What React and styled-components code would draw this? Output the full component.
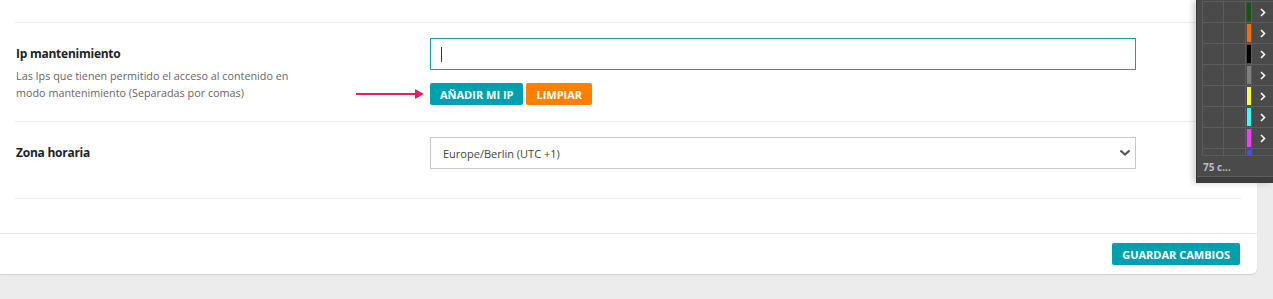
import React from "react";
import styled, { createGlobalStyle } from "styled-components";

const Global = createGlobalStyle`
  html, body { margin: 0; padding: 0; background: #ececec; }
  body { font-family: "Open Sans", "Liberation Sans", sans-serif; color: #333; }
  * { box-sizing: border-box; }
`;

const Page = styled.div`
  position: relative;
  width: 1273px;
  height: 299px;
  overflow: hidden;
  background: #ececec;
`;

const Card = styled.div`
  width: 1257px;
  background: #fff;
  border-radius: 0 0 6px 0;
  box-shadow: 0 1px 1px rgba(0, 0, 0, 0.12);
`;

const Body = styled.div`
  padding: 22px 16px 34px 15px;
`;

const Row = styled.div`
  position: relative;
  display: grid;
  grid-template-columns: 415px 706px;
  border-top: 1px solid #ebebeb;
  padding: 15px 0 ${(p) => p.$pb}px;
  &:last-child { border-bottom: 1px solid #ebebeb; }
`;

const Label = styled.div`
  padding: 7px 0 0 1px;
`;

const Title = styled.div`
  font-size: 12px;
  line-height: 18px;
  font-weight: 700;
  color: #222;
  letter-spacing: -0.25px;
`;

const Desc = styled.div`
  margin-top: 4px;
  font-size: 10.8px;
  line-height: 17px;
  color: #666;
  max-width: 285px;
`;

const Control = styled.div`
  display: flex;
  flex-direction: column;
  gap: 13px;
`;

const TextInput = styled.div`
  height: 32px;
  border: 1px solid #12a0ae;
  display: flex;
  align-items: center;
  padding-left: 10px;
`;

const Caret = styled.span`
  width: 1px;
  height: 15px;
  background: #333;
`;

const Buttons = styled.div`
  display: flex;
  gap: 3px;
`;

const Btn = styled.button`
  height: 22px;
  padding: 0 ${(p) => p.$px || 10}px;
  border: none;
  border-radius: 2px;
  background: ${(p) => p.$bg};
  color: #fff;
  font-family: "Open Sans", "Liberation Sans", sans-serif;
  font-weight: 700;
  font-size: 11px;
  letter-spacing: 0;
  cursor: pointer;
`;

const Select = styled.div`
  height: 32px;
  border: 1px solid #c8c8c8;
  display: flex;
  align-items: center;
  justify-content: space-between;
  padding: 0 3px 0 12px;
  font-size: 11px;
  color: #444;
`;

const Arrow = styled.svg`
  position: absolute;
  left: 341px;
  top: 65px;
`;

const Footer = styled.div`
  border-top: 1px solid #e6e6e6;
  display: flex;
  justify-content: flex-end;
  padding: 9px 17px 9px;
`;

/* floating dark panel */
const Panel = styled.div`
  position: absolute;
  top: 0;
  left: 1196px;
  width: 77px;
  height: 183px;
  background: #4a4a4a;
  border-left: 1px solid #383838;
  box-shadow: -3px 0 6px rgba(0, 0, 0, 0.18);
  display: flex;
  flex-direction: column;
`;

const Grid = styled.div`
  margin: 1px 0 0 5px;
  height: 155px;
  border-left: 1px solid #5c5c5c;
  border-bottom: 1px solid #5c5c5c;
  overflow: hidden;
`;

const GRow = styled.div`
  display: grid;
  grid-template-columns: 21px 22px 6px 1fr;
  height: 21px;
  border-top: 1px solid #5c5c5c;
`;

const Cell = styled.div`
  border-right: ${(p) => (p.$last ? "none" : "1px solid #5c5c5c")};
  display: flex;
  align-items: center;
  justify-content: center;
`;

const Bar = styled.div`
  width: 4px;
  height: 18px;
  margin-left: 1px;
  background: ${(p) => p.$c};
`;

const PanelText = styled.div`
  padding: 4px 0 0 6px;
  font-size: 10px;
  font-weight: 700;
  color: #b8bec8;
  height: 21px;
  border-bottom: 1px solid #5e5e5e;
`;

const PanelBar = styled.div`
  flex: 1;
  background: #3d3d3d;
`;

const colors = ["#0b5a12", "#ff6a00", "#000000", "#7f7f7f", "#ffff3a", "#38ffff", "#ff3aff", "#4a4aff"];

const Chevron = () => (
  <svg width="6" height="9" viewBox="0 0 6 9">
    <path d="M1 1 L4.5 4.5 L1 8" fill="none" stroke="#fff" strokeWidth="1.6" />
  </svg>
);

export default function App() {
  return (
    <>
      <Global />
      <Page>
        <Card>
          <Body>
            <Row $pb={16}>
              <Label>
                <Title>Ip mantenimiento</Title>
                <Desc>
                  Las Ips que tienen permitido el acceso al contenido en modo mantenimiento (Separadas por comas)
                </Desc>
              </Label>
              <Control>
                <TextInput>
                  <Caret />
                </TextInput>
                <Buttons>
                  <Btn $bg="#00a0ae">AÑADIR MI IP</Btn>
                  <Btn $bg="#ff7f00">LIMPIAR</Btn>
                </Buttons>
              </Control>
              <Arrow width="70" height="12" viewBox="0 0 70 12">
                <line x1="0" y1="6" x2="60" y2="6" stroke="#e91e6b" strokeWidth="2" />
                <path d="M59 1 L68 6 L59 11 Z" fill="#e91e6b" />
              </Arrow>
            </Row>
            <Row $pb={29}>
              <Label>
                <Title>Zona horaria</Title>
              </Label>
              <Control>
                <Select>
                  <span>Europe/Berlin (UTC +1)</span>
                  <svg width="14" height="10" viewBox="0 0 14 10">
                    <path d="M2.5 2.5 L7 6.5 L11.5 2.5" fill="none" stroke="#555" strokeWidth="2.2" />
                  </svg>
                </Select>
              </Control>
            </Row>
          </Body>
          <Footer>
            <Btn $bg="#00a0ae">GUARDAR CAMBIOS</Btn>
          </Footer>
        </Card>
        <Panel>
          <Grid>
            {colors.map((c, i) => (
              <GRow key={i}>
                <Cell />
                <Cell />
                <Cell>
                  <Bar $c={c} />
                </Cell>
                <Cell $last>{i < 7 && <Chevron />}</Cell>
              </GRow>
            ))}
          </Grid>
          <PanelText>75 c...</PanelText>
          <PanelBar />
        </Panel>
      </Page>
    </>
  );
}
